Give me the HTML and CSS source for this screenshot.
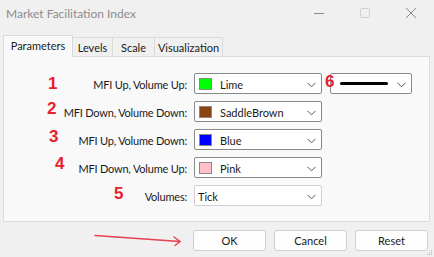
FILE: index.html
```html
<!DOCTYPE html>
<html>
<head>
<meta charset="utf-8">
<link rel="stylesheet" href="styles.css">
</head>
<body>
<div class="window">
  <div class="titlebar">
    <span class="title">Market Facilitation Index</span>
    <div class="controls">
      <span class="ctl"><svg width="12" height="12" viewBox="0 0 12 12"><path d="M1 6.5h10" stroke="#8a8a8a" stroke-width="1"/></svg></span>
      <span class="ctl"><svg width="12" height="12" viewBox="0 0 12 12"><rect x="1.5" y="1.5" width="9" height="9" rx="1.2" fill="none" stroke="#d0d0d0" stroke-width="1"/></svg></span>
      <span class="ctl"><svg width="12" height="12" viewBox="0 0 12 12"><path d="M1 1L11 11M11 1L1 11" stroke="#8a8a8a" stroke-width="1"/></svg></span>
    </div>
  </div>
  <div class="tabs">
    <span class="tab active">Parameters</span>
    <span class="tab t-levels">Levels</span>
    <span class="tab t-scale">Scale</span>
    <span class="tab t-vis">Visualization</span>
  </div>
  <div class="panel">
    <div class="form">
      <label class="lbl">MFI Up, Volume Up:</label>
      <div class="combo dark"><span class="sw" style="background:#00ff00"></span><span class="ctext">Lime</span><svg class="chev" width="9" height="6" viewBox="0 0 9 6"><path d="M0.5 0.8L4.5 4.8L8.5 0.8" fill="none" stroke="#555" stroke-width="1"/></svg></div>
      <div class="combo dark linecombo"><span class="line"></span><svg class="chev" width="9" height="6" viewBox="0 0 9 6"><path d="M0.5 0.8L4.5 4.8L8.5 0.8" fill="none" stroke="#555" stroke-width="1"/></svg></div>

      <label class="lbl">MFI Down, Volume Down:</label>
      <div class="combo dark"><span class="sw" style="background:#8b4513"></span><span class="ctext">SaddleBrown</span><svg class="chev" width="9" height="6" viewBox="0 0 9 6"><path d="M0.5 0.8L4.5 4.8L8.5 0.8" fill="none" stroke="#555" stroke-width="1"/></svg></div>
      <span></span>

      <label class="lbl">MFI Up, Volume Down:</label>
      <div class="combo dark"><span class="sw" style="background:#0000ff"></span><span class="ctext">Blue</span><svg class="chev" width="9" height="6" viewBox="0 0 9 6"><path d="M0.5 0.8L4.5 4.8L8.5 0.8" fill="none" stroke="#555" stroke-width="1"/></svg></div>
      <span></span>

      <label class="lbl">MFI Down, Volume Up:</label>
      <div class="combo dark"><span class="sw" style="background:#ffc0cb"></span><span class="ctext">Pink</span><svg class="chev" width="9" height="6" viewBox="0 0 9 6"><path d="M0.5 0.8L4.5 4.8L8.5 0.8" fill="none" stroke="#555" stroke-width="1"/></svg></div>
      <span></span>

      <label class="lbl">Volumes:</label>
      <div class="combo light"><span class="ctext plain">Tick</span><svg class="chev" width="9" height="6" viewBox="0 0 9 6"><path d="M0.5 0.8L4.5 4.8L8.5 0.8" fill="none" stroke="#555" stroke-width="1"/></svg></div>
      <span></span>
    </div>
  </div>
  <div class="buttons">
    <button class="btn">OK</button>
    <button class="btn">Cancel</button>
    <button class="btn">Reset</button>
  </div>
  <svg class="grip" width="6" height="6" viewBox="0 0 6 6"><g fill="#b0b0b0"><rect x="4" y="0" width="1" height="1"/><rect x="2" y="2" width="1" height="1"/><rect x="4" y="2" width="1" height="1"/><rect x="0" y="4" width="1" height="1"/><rect x="2" y="4" width="1" height="1"/><rect x="4" y="4" width="1" height="1"/></g></svg>

  <span class="num n1">1</span>
  <span class="num n2">2</span>
  <span class="num n3">3</span>
  <span class="num n4">4</span>
  <span class="num n5">5</span>
  <span class="num n6">6</span>
  <svg class="arrow" width="434" height="257" viewBox="0 0 434 257"><g fill="none" stroke="#e8404f" stroke-width="1.4" stroke-linecap="round"><path d="M95 235.5L180 241.5"/><path d="M174 237L180 241.5L175 245.5"/></g></svg>
</div>
</body>
</html>
```

FILE: styles.css
```css
* { box-sizing: border-box; }
html, body { margin: 0; padding: 0; }
body {
  width: 434px;
  height: 257px;
  background: #f0f0f0;
  font-family: Lato, "Noto Sans", sans-serif;
  font-size: 11px;
  color: #1a1a1a;
  overflow: hidden;
}
.window {
  position: relative;
  width: 434px;
  height: 257px;
}
.titlebar {
  height: 30px;
  display: flex;
  align-items: center;
  justify-content: space-between;
  padding-left: 6px;
}
.title {
  color: #8c8c8c;
  font-size: 12px;
  margin-top: -4px;
}
.controls {
  display: flex;
  margin-top: -5px;
}
.ctl {
  width: 46px;
  display: flex;
  justify-content: center;
}
.tabs {
  display: flex;
  align-items: flex-end;
  height: 21px;
  margin-top: 5px;
  padding-left: 3px;
}
.tab {
  height: 19px;
  border: 1px solid #dadada;
  border-bottom: none;
  border-left: none;
  background: #f0f0f0;
  display: flex;
  align-items: center;
  justify-content: center;
  font-size: 11px;
  padding-top: 1px;
}
.tab.active {
  height: 22px;
  width: 70px;
  border-left: 1px solid #dadada;
  background: #f9f9f9;
  margin-bottom: -1px;
  position: relative;
  z-index: 1;
  padding-top: 0;
  padding-bottom: 2px;
}
.t-levels { width: 40px; }
.t-scale { width: 42px; }
.t-vis { width: 68px; }
.panel {
  margin-left: 3px;
  width: 427px;
  height: 166px;
  border: 1px solid #dcdcdc;
  background: #f9f9f9;
  padding-top: 16px;
}
.form {
  display: grid;
  grid-template-columns: 182px 128px 82px;
  grid-auto-rows: 21px;
  row-gap: 7px;
  column-gap: 8px;
}
.lbl {
  display: flex;
  align-items: center;
  justify-content: flex-end;
  font-size: 11px;
  letter-spacing: -0.2px;
  padding-top: 1px;
  margin-right: -1px;
}
.combo {
  display: flex;
  align-items: center;
  background: #ffffff;
  border: 1px solid #8a8a8a;
  border-radius: 2px;
  padding-left: 4px;
  position: relative;
}
.combo.light { border-color: #cfcfcf; padding-left: 3px; }
.sw {
  width: 13px;
  height: 12px;
  border: 1px solid #8a8a8a;
  flex: none;
}
.ctext {
  margin-left: 8px;
  font-size: 11px;
  padding-top: 1px;
}
.ctext.plain { margin-left: 0; }
.chev {
  position: absolute;
  right: 5px;
  top: 8px;
}
.linecombo { padding-left: 9px; }
.line {
  width: 48px;
  height: 3px;
  background: #000;
  border-radius: 2px;
}
.buttons {
  display: flex;
  gap: 8px;
  padding-left: 193px;
  margin-top: 8px;
}
.btn {
  width: 73px;
  height: 21px;
  border: 1px solid #d0d0d0;
  border-radius: 3px;
  background: #fdfdfd;
  font-family: inherit;
  font-size: 11px;
  color: #1a1a1a;
  padding: 0;
}
.grip {
  position: absolute;
  right: 1px;
  bottom: 1px;
}
.num {
  position: absolute;
  color: #e8202a;
  font-family: "Liberation Sans", sans-serif;
  font-weight: bold;
  font-size: 17px;
  line-height: 1;
}
.n1 { left: 48px; top: 75px; }
.n2 { left: 47px; top: 100px; }
.n3 { left: 49px; top: 128px; }
.n4 { left: 55px; top: 155px; }
.n5 { left: 114px; top: 185px; }
.n6 { left: 325px; top: 73px; }
.arrow {
  position: absolute;
  left: 0;
  top: 0;
  pointer-events: none;
}
```
